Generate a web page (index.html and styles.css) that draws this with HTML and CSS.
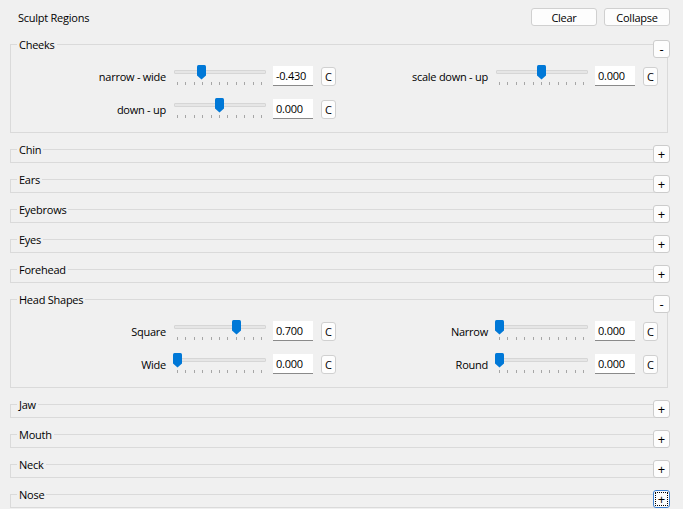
FILE: index.html
```html
<!DOCTYPE html>
<html>
<head>
<meta charset="utf-8">
<link rel="stylesheet" href="styles.css">
</head>
<body>
<div class="panel">
  <div class="header">
    <span class="heading">Sculpt Regions</span>
    <div class="actions">
      <button class="btn">Clear</button>
      <button class="btn">Collapse</button>
    </div>
  </div>

  <div class="item">
    <div class="frame open">
      <div class="legend">Cheeks</div>
      <div class="grid">
        <div class="ctl">
          <span class="lbl">narrow - wide</span>
          <div class="slider"><div class="groove"></div><svg class="handle" style="left:22.8px" width="9" height="15" viewBox="0 0 9 15"><path d="M1.5 0H7.5Q9 0 9 1.5V10.5L4.5 14.5L0 10.5V1.5Q0 0 1.5 0Z"/></svg><div class="ticks"><i></i><i></i><i></i><i></i><i></i><i></i><i></i><i></i><i></i><i></i><i></i></div></div>
          <span class="val">-0.430</span>
          <button class="cbtn">C</button>
        </div>
        <div class="ctl">
          <span class="lbl">scale down - up</span>
          <div class="slider"><div class="groove"></div><svg class="handle" style="left:40.8px" width="9" height="15" viewBox="0 0 9 15"><path d="M1.5 0H7.5Q9 0 9 1.5V10.5L4.5 14.5L0 10.5V1.5Q0 0 1.5 0Z"/></svg><div class="ticks"><i></i><i></i><i></i><i></i><i></i><i></i><i></i><i></i><i></i><i></i><i></i></div></div>
          <span class="val">0.000</span>
          <button class="cbtn">C</button>
        </div>
        <div class="ctl">
          <span class="lbl">down - up</span>
          <div class="slider"><div class="groove"></div><svg class="handle" style="left:40.8px" width="9" height="15" viewBox="0 0 9 15"><path d="M1.5 0H7.5Q9 0 9 1.5V10.5L4.5 14.5L0 10.5V1.5Q0 0 1.5 0Z"/></svg><div class="ticks"><i></i><i></i><i></i><i></i><i></i><i></i><i></i><i></i><i></i><i></i><i></i></div></div>
          <span class="val">0.000</span>
          <button class="cbtn">C</button>
        </div>
      </div>
    </div>
    <button class="toggle">-</button>
  </div>

  <div class="item"><div class="frame"><div class="legend">Chin</div></div><button class="toggle">+</button></div>
  <div class="item"><div class="frame"><div class="legend">Ears</div></div><button class="toggle">+</button></div>
  <div class="item"><div class="frame"><div class="legend">Eyebrows</div></div><button class="toggle">+</button></div>
  <div class="item"><div class="frame"><div class="legend">Eyes</div></div><button class="toggle">+</button></div>
  <div class="item"><div class="frame"><div class="legend">Forehead</div></div><button class="toggle">+</button></div>

  <div class="item">
    <div class="frame open">
      <div class="legend">Head Shapes</div>
      <div class="grid">
        <div class="ctl">
          <span class="lbl">Square</span>
          <div class="slider"><div class="groove"></div><svg class="handle" style="left:57.5px" width="9" height="15" viewBox="0 0 9 15"><path d="M1.5 0H7.5Q9 0 9 1.5V10.5L4.5 14.5L0 10.5V1.5Q0 0 1.5 0Z"/></svg><div class="ticks"><i></i><i></i><i></i><i></i><i></i><i></i><i></i><i></i><i></i><i></i><i></i></div></div>
          <span class="val">0.700</span>
          <button class="cbtn">C</button>
        </div>
        <div class="ctl">
          <span class="lbl">Narrow</span>
          <div class="slider"><div class="groove"></div><svg class="handle" style="left:-1px" width="9" height="15" viewBox="0 0 9 15"><path d="M1.5 0H7.5Q9 0 9 1.5V10.5L4.5 14.5L0 10.5V1.5Q0 0 1.5 0Z"/></svg><div class="ticks"><i></i><i></i><i></i><i></i><i></i><i></i><i></i><i></i><i></i><i></i><i></i></div></div>
          <span class="val">0.000</span>
          <button class="cbtn">C</button>
        </div>
        <div class="ctl">
          <span class="lbl">Wide</span>
          <div class="slider"><div class="groove"></div><svg class="handle" style="left:-1px" width="9" height="15" viewBox="0 0 9 15"><path d="M1.5 0H7.5Q9 0 9 1.5V10.5L4.5 14.5L0 10.5V1.5Q0 0 1.5 0Z"/></svg><div class="ticks"><i></i><i></i><i></i><i></i><i></i><i></i><i></i><i></i><i></i><i></i><i></i></div></div>
          <span class="val">0.000</span>
          <button class="cbtn">C</button>
        </div>
        <div class="ctl">
          <span class="lbl">Round</span>
          <div class="slider"><div class="groove"></div><svg class="handle" style="left:-1px" width="9" height="15" viewBox="0 0 9 15"><path d="M1.5 0H7.5Q9 0 9 1.5V10.5L4.5 14.5L0 10.5V1.5Q0 0 1.5 0Z"/></svg><div class="ticks"><i></i><i></i><i></i><i></i><i></i><i></i><i></i><i></i><i></i><i></i><i></i></div></div>
          <span class="val">0.000</span>
          <button class="cbtn">C</button>
        </div>
      </div>
    </div>
    <button class="toggle">-</button>
  </div>

  <div class="item"><div class="frame"><div class="legend">Jaw</div></div><button class="toggle">+</button></div>
  <div class="item"><div class="frame"><div class="legend">Mouth</div></div><button class="toggle">+</button></div>
  <div class="item"><div class="frame"><div class="legend">Neck</div></div><button class="toggle">+</button></div>
  <div class="item"><div class="frame"><div class="legend">Nose</div></div><button class="toggle focus">+</button></div>
</div>
</body>
</html>
```

FILE: styles.css
```css
* { box-sizing: border-box; }
html, body {
  margin: 0;
  padding: 0;
  background: #f0f0f0;
  height: 509px;
  overflow: hidden;
}
body {
  font-family: "Open Sans", "Liberation Sans", sans-serif;
  font-size: 11px;
  letter-spacing: -0.25px;
  color: #000;
}
button {
  font-family: inherit;
  font-size: 11px;
  letter-spacing: -0.25px;
  color: #000;
  margin: 0;
  padding: 0;
  background: #fdfdfd;
  border: 1px solid #d0d0d0;
  border-radius: 3px;
  line-height: 1;
}
.panel {
  padding: 8px 13px 0 10px;
}
.header {
  display: flex;
  align-items: center;
  height: 18px;
  margin-bottom: 14px;
}
.heading {
  margin-left: 8px;
}
.actions {
  margin-left: auto;
  display: flex;
  gap: 7px;
}
.btn {
  width: 66px;
  height: 18px;
}
.item {
  display: grid;
  margin-bottom: 12px;
}
.frame, .toggle {
  grid-area: 1 / 1;
}
.frame {
  margin-top: 4px;
  margin-right: 2px;
  border: 1px solid #dadada;
  min-height: 10px;
}
.legend {
  display: table;
  margin: -8px 0 0 6px;
  padding: 0 2px;
  height: 16px;
  line-height: 16px;
  background: #f0f0f0;
}
.toggle {
  justify-self: end;
  align-self: start;
  width: 17px;
  height: 18px;
  font-size: 13px;
  letter-spacing: 0;
  border-color: #cccccc;
}
.toggle.focus {
  border-color: #3c7fd0;
  outline: 1px dotted #000;
  outline-offset: -3px;
}
.grid {
  display: grid;
  grid-template-columns: 322px 322px;
  row-gap: 11px;
  padding: 12px 9px 12px 3px;
}
.ctl {
  display: flex;
  align-items: center;
  height: 22px;
}
.lbl {
  width: 152px;
  text-align: right;
  margin-right: 8px;
}
.slider {
  position: relative;
  width: 92px;
  height: 22px;
  margin-right: 7px;
}
.groove {
  margin-top: 5px;
  height: 4px;
  background: #e6e6e6;
  border: 1px solid #d6d6d6;
  border-radius: 1px;
}
.handle {
  position: absolute;
  top: 0;
  fill: #0078d7;
}
.ticks {
  display: flex;
  justify-content: space-between;
  margin-top: 8px;
  padding: 0 4px 0 3px;
  height: 3px;
}
.ticks i {
  width: 1px;
  height: 3px;
  background: #a6a6a6;
}
.val {
  width: 40px;
  height: 20px;
  line-height: 19px;
  background: #fff;
  border-bottom: 1px solid #8a8a8a;
  padding-left: 3px;
  margin-right: 8px;
}
.cbtn {
  width: 15px;
  height: 19px;
  letter-spacing: 0;
}
```
